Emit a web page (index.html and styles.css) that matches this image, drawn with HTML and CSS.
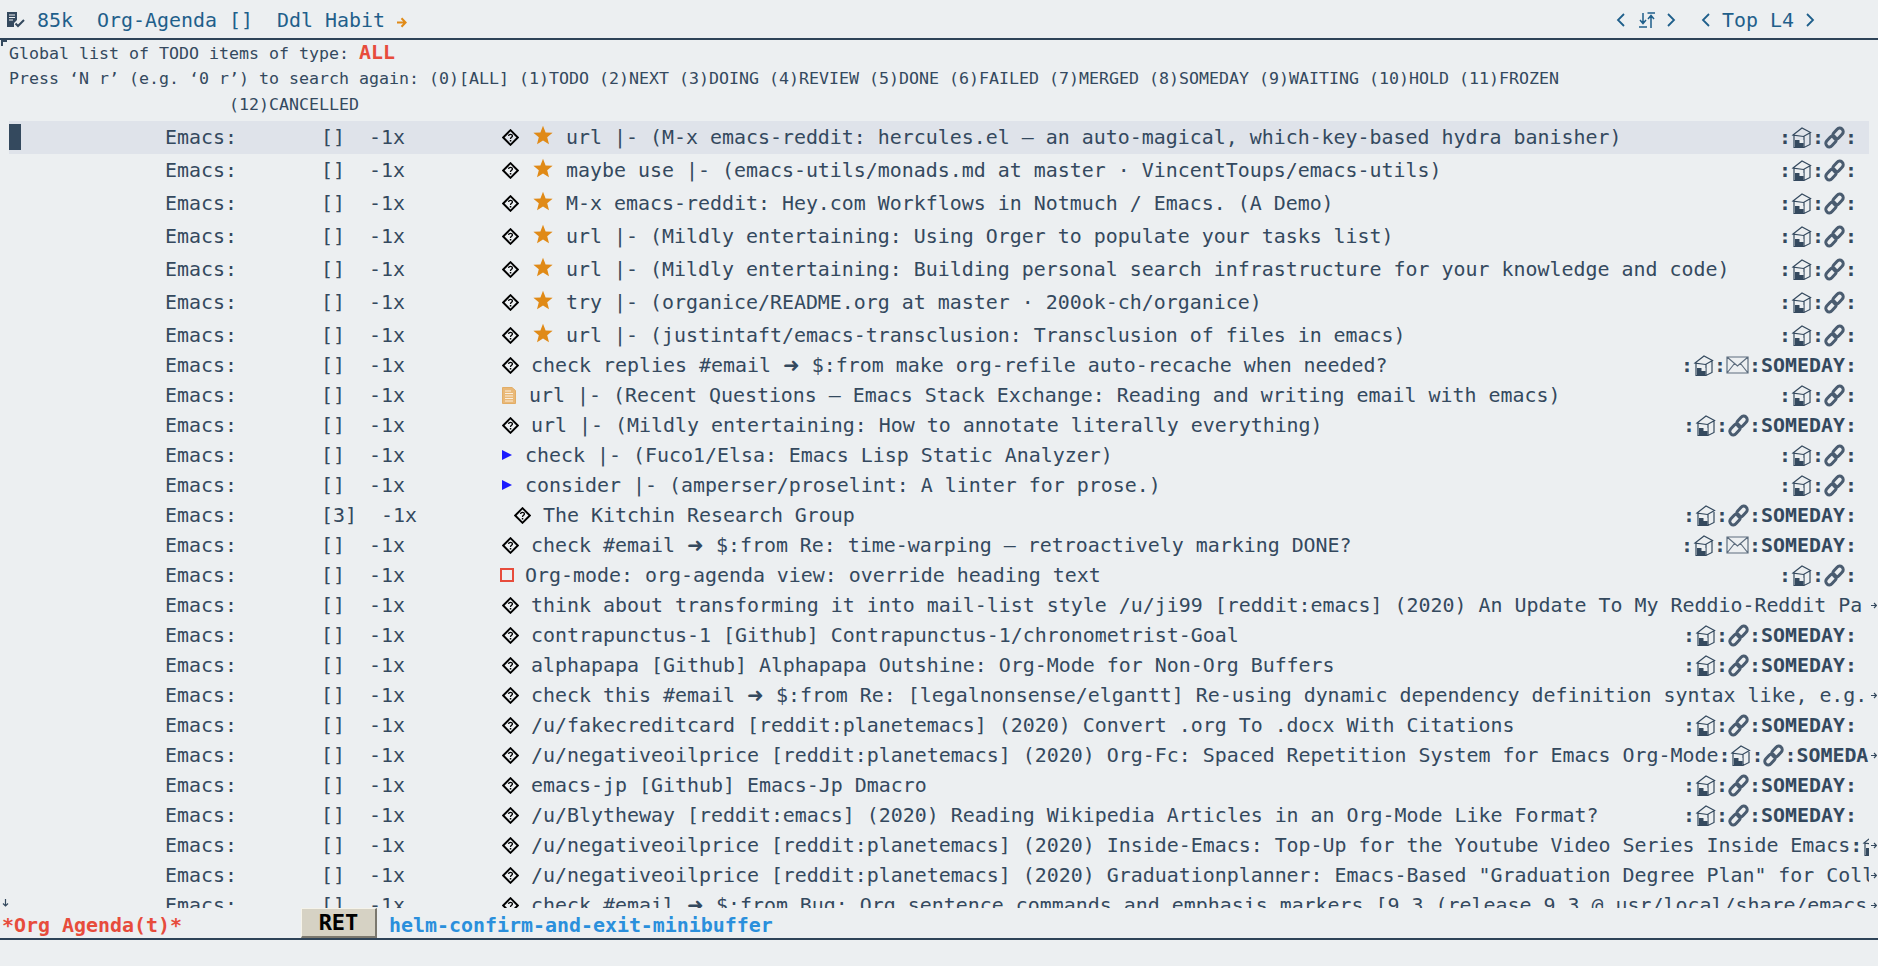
FILE: index.html
```html
<!DOCTYPE html>
<html lang="en">
<head>
  <meta charset="UTF-8" />
  <title>*Org Agenda(t)*</title>
  <link rel="stylesheet" href="styles.css">
</head>
<body>
  <svg class="defs" width="0" height="0">
    <symbol id="diamond" viewBox="0 0 17 17">
      <path d="M8.5 1.2 15.8 8.5 8.5 15.8 1.2 8.5Z" fill="none" stroke="#000" stroke-width="1.9"/>
      <path d="M6.6 7.1C6.6 4.7 10.4 4.7 10.4 7 10.4 8.3 8.5 8.3 8.5 10" fill="none" stroke="#000" stroke-width="1.3"/>
      <rect x="7.8" y="11" width="1.5" height="1.5"/>
    </symbol>
    <symbol id="star" viewBox="0 0 20 20">
      <path d="M10 .8 12.6 7.4 19.6 7.8 14.2 12.3 16 19.2 10 15.4 4 19.2 5.8 12.3.4 7.8 7.4 7.4Z" fill="#e08a17"/>
    </symbol>
    <symbol id="note" viewBox="0 0 14 17">
      <path d="M.5.5H10L13.5 3.5V16.5H.5Z" fill="#e9b877" stroke="#e2ad66"/>
      <path d="M3 4H9M3 6.5H11M3 9H11M3 11.5H11M3 14H11" stroke="#fbeedd"/>
    </symbol>
    <symbol id="house" viewBox="0 0 21 24">
      <path d="M2 10 11 3 19.5 7.5 12.5 11.5Z M3 10.5V22.5H13L19 19.5V7.5 M13 11.5V22.5" fill="none" stroke="#34495e" stroke-width="1.2"/>
      <rect x="4" y="15" width="8.5" height="7.5" fill="#34495e"/>
      <rect x="8.5" y="15" width="4" height="3" fill="#eceff1"/>
    </symbol>
    <symbol id="link" viewBox="0 0 20 24">
      <g fill="none" stroke="#4a5c70" stroke-width="3">
        <rect x="-3.5" y="-6" width="7" height="12" rx="3.4" transform="translate(6.5 16.5) rotate(42)"/>
        <rect x="-3.5" y="-6" width="7" height="12" rx="3.4" transform="translate(13.5 8.5) rotate(42)"/>
      </g>
    </symbol>
    <symbol id="mail" viewBox="0 0 23 18">
      <path d="M1 1H22V17H1Z M1 1 11.5 10 22 1 M1 17 8.5 7.5 M22 17 14.5 7.5" fill="none" stroke="#5d6d7e" stroke-width="1.2"/>
    </symbol>
    <symbol id="more" viewBox="0 0 6 7">
      <path d="M0 3.5H5M3 1 5.5 3.5 3 6" fill="none" stroke="#34495e" stroke-width="1.2"/>
    </symbol>
  </svg>

  <header class="topbar">
    <svg class="book" width="18" height="16" viewBox="0 0 18 16">
      <path d="M0 0H10V8L7 11V15H0Z" fill="#34495e"/>
      <path d="M2 3H8M2 5.5H8M2 8H6" stroke="#eceff1"/>
      <path d="M8.5 11.5 11 14 17 8" fill="none" stroke="#34495e" stroke-width="2"/>
    </svg>
    <span class="size">85k</span>
    <span class="mode">Org-Agenda []</span>
    <span class="mode-extra">Ddl Habit</span>
    <svg class="habit-arrow" width="10" height="11" viewBox="0 0 10 11">
      <path d="M0 5.5H8M4.5 1.2 8.6 5.5 4.5 9.8" fill="none" stroke="#e08a17" stroke-width="2"/>
    </svg>
    <div class="top-right">
      <svg class="chev" width="9" height="14" viewBox="0 0 9 14"><path d="M8 1 2 7 8 13" /></svg>
      <svg class="sort" width="16" height="17" viewBox="0 0 16 17">
        <path d="M4 1V11M1 8 4 11.5 7 8M0 15H8M8.5 1H16M12 16V4M9 7 12 3.5 15 7" fill="none" stroke="#1f5f8b" stroke-width="1.5"/>
      </svg>
      <svg class="chev" width="9" height="14" viewBox="0 0 9 14"><path d="M1 1 7 7 1 13" /></svg>
      <svg class="chev gap" width="9" height="14" viewBox="0 0 9 14"><path d="M8 1 2 7 8 13" /></svg>
      <span class="pos">Top L4</span>
      <svg class="chev" width="9" height="14" viewBox="0 0 9 14"><path d="M1 1 7 7 1 13" /></svg>
    </div>
  </header>

  <main class="agenda">
    <i class="fringe-corner"></i>
    <div class="intro">Global list of TODO items of type: <b class="all">ALL</b></div>
    <div class="intro">Press ‘N r’ (e.g. ‘0 r’) to search again: (0)[ALL] (1)TODO (2)NEXT (3)DOING (4)REVIEW (5)DONE (6)FAILED (7)MERGED (8)SOMEDAY (9)WAITING (10)HOLD (11)FROZEN</div>
    <div class="intro wrapped">(12)CANCELLED</div>

    <div class="row tall current"><span class="gutter"><i class="cursor"></i></span><span class="cat">Emacs:</span><span class="count">[]</span><span class="rep">-1x</span><span class="mark m-star"><svg class="i-diamond"><use href="#diamond"/></svg><svg class="i-star"><use href="#star"/></svg></span><span class="title">url |- (M-x emacs-reddit: hercules.el — an auto-magical, which-key-based hydra banisher)</span><span class="tags"><b>:</b><svg class="i-tag"><use href="#house"/></svg><b>:</b><svg class="i-tag"><use href="#link"/></svg><b>:</b></span></div>
    <div class="row tall"><span class="gutter"></span><span class="cat">Emacs:</span><span class="count">[]</span><span class="rep">-1x</span><span class="mark m-star"><svg class="i-diamond"><use href="#diamond"/></svg><svg class="i-star"><use href="#star"/></svg></span><span class="title">maybe use |- (emacs-utils/monads.md at master · VincentToups/emacs-utils)</span><span class="tags"><b>:</b><svg class="i-tag"><use href="#house"/></svg><b>:</b><svg class="i-tag"><use href="#link"/></svg><b>:</b></span></div>
    <div class="row tall"><span class="gutter"></span><span class="cat">Emacs:</span><span class="count">[]</span><span class="rep">-1x</span><span class="mark m-star"><svg class="i-diamond"><use href="#diamond"/></svg><svg class="i-star"><use href="#star"/></svg></span><span class="title">M-x emacs-reddit: Hey.com Workflows in Notmuch / Emacs. (A Demo)</span><span class="tags"><b>:</b><svg class="i-tag"><use href="#house"/></svg><b>:</b><svg class="i-tag"><use href="#link"/></svg><b>:</b></span></div>
    <div class="row tall"><span class="gutter"></span><span class="cat">Emacs:</span><span class="count">[]</span><span class="rep">-1x</span><span class="mark m-star"><svg class="i-diamond"><use href="#diamond"/></svg><svg class="i-star"><use href="#star"/></svg></span><span class="title">url |- (Mildly entertaining: Using Orger to populate your tasks list)</span><span class="tags"><b>:</b><svg class="i-tag"><use href="#house"/></svg><b>:</b><svg class="i-tag"><use href="#link"/></svg><b>:</b></span></div>
    <div class="row tall"><span class="gutter"></span><span class="cat">Emacs:</span><span class="count">[]</span><span class="rep">-1x</span><span class="mark m-star"><svg class="i-diamond"><use href="#diamond"/></svg><svg class="i-star"><use href="#star"/></svg></span><span class="title">url |- (Mildly entertaining: Building personal search infrastructure for your knowledge and code)</span><span class="tags"><b>:</b><svg class="i-tag"><use href="#house"/></svg><b>:</b><svg class="i-tag"><use href="#link"/></svg><b>:</b></span></div>
    <div class="row tall"><span class="gutter"></span><span class="cat">Emacs:</span><span class="count">[]</span><span class="rep">-1x</span><span class="mark m-star"><svg class="i-diamond"><use href="#diamond"/></svg><svg class="i-star"><use href="#star"/></svg></span><span class="title">try |- (organice/README.org at master · 200ok-ch/organice)</span><span class="tags"><b>:</b><svg class="i-tag"><use href="#house"/></svg><b>:</b><svg class="i-tag"><use href="#link"/></svg><b>:</b></span></div>
    <div class="row tall"><span class="gutter"></span><span class="cat">Emacs:</span><span class="count">[]</span><span class="rep">-1x</span><span class="mark m-star"><svg class="i-diamond"><use href="#diamond"/></svg><svg class="i-star"><use href="#star"/></svg></span><span class="title">url |- (justintaft/emacs-transclusion: Transclusion of files in emacs)</span><span class="tags"><b>:</b><svg class="i-tag"><use href="#house"/></svg><b>:</b><svg class="i-tag"><use href="#link"/></svg><b>:</b></span></div>

    <div class="row"><span class="gutter"></span><span class="cat">Emacs:</span><span class="count">[]</span><span class="rep">-1x</span><span class="mark"><svg class="i-diamond"><use href="#diamond"/></svg></span><span class="title">check replies #email <b class="arrow">➜</b> $:from make org-refile auto-recache when needed?</span><span class="tags"><b>:</b><svg class="i-tag"><use href="#house"/></svg><b>:</b><svg class="i-mail"><use href="#mail"/></svg><b>:SOMEDAY:</b></span></div>
    <div class="row"><span class="gutter"></span><span class="cat">Emacs:</span><span class="count">[]</span><span class="rep">-1x</span><span class="mark m-note"><svg class="i-note"><use href="#note"/></svg></span><span class="title">url |- (Recent Questions — Emacs Stack Exchange: Reading and writing email with emacs)</span><span class="tags"><b>:</b><svg class="i-tag"><use href="#house"/></svg><b>:</b><svg class="i-tag"><use href="#link"/></svg><b>:</b></span></div>
    <div class="row"><span class="gutter"></span><span class="cat">Emacs:</span><span class="count">[]</span><span class="rep">-1x</span><span class="mark"><svg class="i-diamond"><use href="#diamond"/></svg></span><span class="title">url |- (Mildly entertaining: How to annotate literally everything)</span><span class="tags"><b>:</b><svg class="i-tag"><use href="#house"/></svg><b>:</b><svg class="i-tag"><use href="#link"/></svg><b>:SOMEDAY:</b></span></div>
    <div class="row"><span class="gutter"></span><span class="cat">Emacs:</span><span class="count">[]</span><span class="rep">-1x</span><span class="mark m-next"><i class="i-next"></i></span><span class="title">check |- (Fuco1/Elsa: Emacs Lisp Static Analyzer)</span><span class="tags"><b>:</b><svg class="i-tag"><use href="#house"/></svg><b>:</b><svg class="i-tag"><use href="#link"/></svg><b>:</b></span></div>
    <div class="row"><span class="gutter"></span><span class="cat">Emacs:</span><span class="count">[]</span><span class="rep">-1x</span><span class="mark m-next"><i class="i-next"></i></span><span class="title">consider |- (amperser/proselint: A linter for prose.)</span><span class="tags"><b>:</b><svg class="i-tag"><use href="#house"/></svg><b>:</b><svg class="i-tag"><use href="#link"/></svg><b>:</b></span></div>
    <div class="row"><span class="gutter"></span><span class="cat">Emacs:</span><span class="count wide">[3]</span><span class="rep">-1x</span><span class="mark"><svg class="i-diamond"><use href="#diamond"/></svg></span><span class="title">The Kitchin Research Group</span><span class="tags"><b>:</b><svg class="i-tag"><use href="#house"/></svg><b>:</b><svg class="i-tag"><use href="#link"/></svg><b>:SOMEDAY:</b></span></div>
    <div class="row"><span class="gutter"></span><span class="cat">Emacs:</span><span class="count">[]</span><span class="rep">-1x</span><span class="mark"><svg class="i-diamond"><use href="#diamond"/></svg></span><span class="title">check #email <b class="arrow">➜</b> $:from Re: time-warping — retroactively marking DONE?</span><span class="tags"><b>:</b><svg class="i-tag"><use href="#house"/></svg><b>:</b><svg class="i-mail"><use href="#mail"/></svg><b>:SOMEDAY:</b></span></div>
    <div class="row"><span class="gutter"></span><span class="cat">Emacs:</span><span class="count">[]</span><span class="rep">-1x</span><span class="mark m-box"><i class="i-box"></i></span><span class="title">Org-mode: org-agenda view: override heading text</span><span class="tags"><b>:</b><svg class="i-tag"><use href="#house"/></svg><b>:</b><svg class="i-tag"><use href="#link"/></svg><b>:</b></span></div>
    <div class="row"><span class="gutter"></span><span class="cat">Emacs:</span><span class="count">[]</span><span class="rep">-1x</span><span class="mark"><svg class="i-diamond"><use href="#diamond"/></svg></span><span class="title">think about transforming it into mail-list style /u/ji99 [reddit:emacs] (2020) An Update To My Reddio-Reddit Pa</span><svg class="more"><use href="#more"/></svg></div>
    <div class="row"><span class="gutter"></span><span class="cat">Emacs:</span><span class="count">[]</span><span class="rep">-1x</span><span class="mark"><svg class="i-diamond"><use href="#diamond"/></svg></span><span class="title">contrapunctus-1 [Github] Contrapunctus-1/chronometrist-Goal</span><span class="tags"><b>:</b><svg class="i-tag"><use href="#house"/></svg><b>:</b><svg class="i-tag"><use href="#link"/></svg><b>:SOMEDAY:</b></span></div>
    <div class="row"><span class="gutter"></span><span class="cat">Emacs:</span><span class="count">[]</span><span class="rep">-1x</span><span class="mark"><svg class="i-diamond"><use href="#diamond"/></svg></span><span class="title">alphapapa [Github] Alphapapa Outshine: Org-Mode for Non-Org Buffers</span><span class="tags"><b>:</b><svg class="i-tag"><use href="#house"/></svg><b>:</b><svg class="i-tag"><use href="#link"/></svg><b>:SOMEDAY:</b></span></div>
    <div class="row"><span class="gutter"></span><span class="cat">Emacs:</span><span class="count">[]</span><span class="rep">-1x</span><span class="mark"><svg class="i-diamond"><use href="#diamond"/></svg></span><span class="title">check this #email <b class="arrow">➜</b> $:from Re: [legalnonsense/elgantt] Re-using dynamic dependency definition syntax like, e.g.</span><svg class="more"><use href="#more"/></svg></div>
    <div class="row"><span class="gutter"></span><span class="cat">Emacs:</span><span class="count">[]</span><span class="rep">-1x</span><span class="mark"><svg class="i-diamond"><use href="#diamond"/></svg></span><span class="title">/u/fakecreditcard [reddit:planetemacs] (2020) Convert .org To .docx With Citations</span><span class="tags"><b>:</b><svg class="i-tag"><use href="#house"/></svg><b>:</b><svg class="i-tag"><use href="#link"/></svg><b>:SOMEDAY:</b></span></div>
    <div class="row"><span class="gutter"></span><span class="cat">Emacs:</span><span class="count">[]</span><span class="rep">-1x</span><span class="mark"><svg class="i-diamond"><use href="#diamond"/></svg></span><span class="title">/u/negativeoilprice [reddit:planetemacs] (2020) Org-Fc: Spaced Repetition System for Emacs Org-Mode</span><span class="tags cut"><b>:</b><svg class="i-tag"><use href="#house"/></svg><b>:</b><svg class="i-tag"><use href="#link"/></svg><b>:SOMEDA</b></span><svg class="more"><use href="#more"/></svg></div>
    <div class="row"><span class="gutter"></span><span class="cat">Emacs:</span><span class="count">[]</span><span class="rep">-1x</span><span class="mark"><svg class="i-diamond"><use href="#diamond"/></svg></span><span class="title">emacs-jp [Github] Emacs-Jp Dmacro</span><span class="tags"><b>:</b><svg class="i-tag"><use href="#house"/></svg><b>:</b><svg class="i-tag"><use href="#link"/></svg><b>:SOMEDAY:</b></span></div>
    <div class="row"><span class="gutter"></span><span class="cat">Emacs:</span><span class="count">[]</span><span class="rep">-1x</span><span class="mark"><svg class="i-diamond"><use href="#diamond"/></svg></span><span class="title">/u/Blytheway [reddit:emacs] (2020) Reading Wikipedia Articles in an Org-Mode Like Format?</span><span class="tags"><b>:</b><svg class="i-tag"><use href="#house"/></svg><b>:</b><svg class="i-tag"><use href="#link"/></svg><b>:SOMEDAY:</b></span></div>
    <div class="row"><span class="gutter"></span><span class="cat">Emacs:</span><span class="count">[]</span><span class="rep">-1x</span><span class="mark"><svg class="i-diamond"><use href="#diamond"/></svg></span><span class="title">/u/negativeoilprice [reddit:planetemacs] (2020) Inside-Emacs: Top-Up for the Youtube Video Series Inside Emacs</span><span class="tags cut"><b>:</b><svg class="i-tag"><use href="#house"/></svg></span><svg class="more"><use href="#more"/></svg></div>
    <div class="row"><span class="gutter"></span><span class="cat">Emacs:</span><span class="count">[]</span><span class="rep">-1x</span><span class="mark"><svg class="i-diamond"><use href="#diamond"/></svg></span><span class="title">/u/negativeoilprice [reddit:planetemacs] (2020) Graduationplanner: Emacs-Based "Graduation Degree Plan" for Coll</span><svg class="more"><use href="#more"/></svg></div>
    <div class="row"><span class="gutter"></span><span class="cat">Emacs:</span><span class="count">[]</span><span class="rep">-1x</span><span class="mark"><svg class="i-diamond"><use href="#diamond"/></svg></span><span class="title">check #email <b class="arrow">➜</b> $:from Bug: Org sentence commands and emphasis markers [9.3 (release_9.3 @ usr/local/share/emacs</span><svg class="more"><use href="#more"/></svg></div>
    <svg class="fringe-down" width="7" height="8" viewBox="0 0 7 8">
      <path d="M3.5 0V7M1 4.5 3.5 7 6 4.5" fill="none" stroke="#34495e" stroke-width="1.2"/>
    </svg>
  </main>

  <footer class="modeline">
    <b class="buffer">*Org Agenda(t)*</b>
    <kbd class="key">RET</kbd>
    <b class="command">helm-confirm-and-exit-minibuffer</b>
  </footer>
  <div class="minibuffer"></div>
</body>
</html>
```

FILE: styles.css
```css
* {
  box-sizing: border-box;
}
html, body {
  margin: 0;
  height: 100vh;
  overflow: hidden;
  background: #eceff1;
  color: #34495e;
  font-family: "DejaVu Sans Mono", "Liberation Mono", monospace;
  font-size: 19.93px;
}
body {
  display: flex;
  flex-direction: column;
}
.defs {
  position: absolute;
}
i {
  font-style: normal;
}

/* header line */
.topbar {
  flex: none;
  height: 40px;
  display: flex;
  align-items: center;
  padding: 2px 7px 0;
  border-bottom: 2px solid #2e4358;
  color: #1f5f8b;
}
.book {
  margin-right: 12px;
}
.size {
  width: 60px;
}
.mode {
  width: 180px;
}
.habit-arrow {
  margin: 4px 0 0 12px;
}
.top-right {
  margin-left: auto;
  margin-right: 56px;
  display: flex;
  align-items: center;
}
.chev {
  fill: none;
  stroke: #1f5f8b;
  stroke-width: 1.8;
}
.chev.gap {
  margin-left: 25px;
}
.sort {
  margin: 0 12px 0 14px;
}
.pos {
  margin: 0 12px;
}

/* agenda buffer */
.agenda {
  flex: 1;
  min-height: 0;
  position: relative;
  overflow: hidden;
}
.fringe-corner {
  position: absolute;
  left: 1px;
  top: 0;
  width: 6px;
  height: 6px;
  border-left: 2px solid #34495e;
  border-top: 2px solid #34495e;
}
.fringe-down {
  position: absolute;
  left: 2px;
  bottom: 1px;
}
.intro {
  padding-left: 9px;
  font-size: 16.62px;
  height: 26px;
  line-height: 26px;
  white-space: nowrap;
}
.intro.wrapped {
  height: 29px;
  padding-left: 229px;
}
.all {
  color: #e74c3c;
  font-size: 19.93px;
}

.row {
  height: 30px;
  padding-bottom: 4px;
  margin: 0 9px;
  display: flex;
  align-items: center;
  white-space: nowrap;
  overflow: hidden;
}
.row.tall {
  height: 33px;
  padding-bottom: 1px;
}
.row.current {
  background: #dfe3ea;
}
.gutter {
  flex: none;
  width: 156px;
  height: 26px;
}
.cursor {
  display: block;
  width: 12px;
  height: 26px;
  background: #34495e;
}
.cat {
  flex: none;
  width: 156px;
}
.count {
  flex: none;
  width: 48px;
}
.count.wide {
  width: 60px;
}
.rep {
  flex: none;
  width: 132px;
}
.mark {
  flex: none;
  width: 30px;
  display: flex;
  align-items: center;
}
.mark.m-star {
  width: 65px;
}
.mark.m-note {
  width: 28px;
}
.mark.m-next {
  width: 24px;
}
.mark.m-box {
  width: 24px;
}
.i-diamond {
  width: 17px;
  height: 17px;
  margin-left: 1px;
}
.i-star {
  width: 20px;
  height: 20px;
  margin: 0 0 4px 14px;
}
.i-note {
  width: 14px;
  height: 17px;
  margin-left: 1px;
}
.i-next {
  width: 0;
  height: 0;
  margin-left: 1px;
  border-left: 10px solid #1a1aff;
  border-top: 5px solid transparent;
  border-bottom: 5px solid transparent;
}
.i-box {
  width: 14px;
  height: 14px;
  margin-left: -1px;
  border: 2px solid #e74c3c;
}
.title {
  flex: none;
}
.arrow {
  display: inline-block;
  width: 17px;
  text-align: center;
  font-family: "DejaVu Sans", sans-serif;
}
.tags {
  flex: none;
  margin-left: auto;
  margin-right: 12px;
  display: flex;
  align-items: center;
}
.tags.cut {
  margin-left: 0;
  margin-right: 0;
}
.i-tag {
  width: 21px;
  height: 24px;
}
.i-mail {
  width: 23px;
  height: 18px;
}
.more {
  position: absolute;
  right: 1px;
  width: 6px;
  height: 7px;
}

/* bottom mode line */
.modeline {
  flex: none;
  height: 32px;
  display: flex;
  padding-left: 2px;
  border-bottom: 2px solid #2e4358;
}
.buffer {
  width: 299px;
  padding-top: 6px;
  color: #e74c3c;
}
.key {
  width: 76px;
  height: 30px;
  text-align: center;
  line-height: 27px;
  font-family: inherit;
  font-size: 22px;
  font-weight: bold;
  color: #000;
  background: #d6d2c4;
  border-style: solid;
  border-width: 1px 2px 2px 1px;
  border-color: #f5f3ea #7b786e #7b786e #f5f3ea;
}
.command {
  margin-left: 12px;
  padding-top: 6px;
  color: #2a8fdc;
}
.minibuffer {
  flex: none;
  height: 26px;
}
```
